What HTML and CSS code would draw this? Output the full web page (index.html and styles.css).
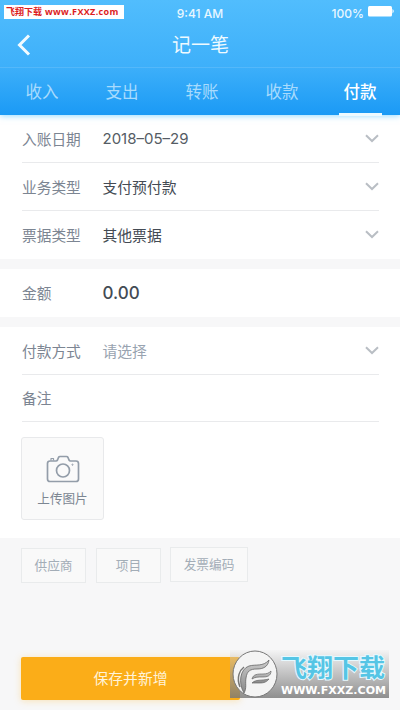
FILE: index.html
```html
<!DOCTYPE html>
<html lang="zh-CN">
<head>
<meta charset="utf-8">
<title>记一笔</title>
<link rel="stylesheet" href="styles.css">
</head>
<body>
<div class="app">
  <header class="header">
    <div class="status">
      <span class="time">9:41 AM</span>
      <span class="power">100%
        <svg class="battery" width="27" height="12" viewBox="0 0 27 12"><rect width="24" height="10.500" rx="1.5" fill="#fff"/><path d="M24.500 3q2.500 2.200 0 4.500z" fill="#fff"/></svg>
      </span>
    </div>
    <div class="nav">
      <svg class="back" width="14" height="22" viewBox="0 0 14 22"><path d="M12 1.500 2.500 11l9.500 9.500" fill="none" stroke="#f2fbff" stroke-width="3"/></svg>
      <h1>记一笔</h1>
    </div>
    <nav class="tabs">
      <span class="tab">收入</span>
      <span class="tab">支出</span>
      <span class="tab">转账</span>
      <span class="tab">收款</span>
      <span class="tab active">付款</span>
    </nav>
    <div class="site-tag"><span class="site-name">飞翔下载</span><span class="site-url">www.FXXZ.com</span></div>
  </header>

  <section class="group first">
    <div class="row"><span class="label">入账日期</span><span class="value date">2018<i>–</i>05<i>–</i>29</span><svg class="chev" width="14" height="9" viewBox="0 0 14 9"><path d="M1 1.3 7 7l6-5.7"/></svg></div>
    <div class="row"><span class="label">业务类型</span><span class="value">支付预付款</span><svg class="chev" width="14" height="9" viewBox="0 0 14 9"><path d="M1 1.3 7 7l6-5.7"/></svg></div>
    <div class="row"><span class="label">票据类型</span><span class="value">其他票据</span><svg class="chev" width="14" height="9" viewBox="0 0 14 9"><path d="M1 1.3 7 7l6-5.7"/></svg></div>
  </section>

  <section class="group">
    <div class="row"><span class="label">金额</span><span class="value amount">0.00</span></div>
  </section>

  <section class="group last">
    <div class="row"><span class="label">付款方式</span><span class="value hint">请选择</span><svg class="chev" width="14" height="9" viewBox="0 0 14 9"><path d="M1 1.3 7 7l6-5.7"/></svg></div>
    <div class="row note"><span class="label">备注</span></div>
    <div class="upload">
      <svg width="34" height="28" viewBox="0 0 34 28" fill="none" stroke="#939da9" stroke-width="1.7" stroke-linejoin="round"><path d="M4 6h6q1 0 1.500-1l1-2.500q.5-1 1.500-1h6.500q1 0 1.500 1l1 2.500q.5 1 1.500 1H30q2.500 0 2.500 2.500v15.500q0 2.500-2.500 2.500H4q-2.500 0-2.500-2.500V8.500Q1.500 6 4 6z"/><path d="M5 5.500V3.500h2.500v2" stroke-width="1.200"/><circle cx="17" cy="15.500" r="6.500"/><circle cx="26.500" cy="9.700" r=".6" stroke-width="1"/></svg>
      <span>上传图片</span>
    </div>
  </section>

  <div class="chips">
    <span class="chip">供应商</span>
    <span class="chip">项目</span>
    <span class="chip wide">发票编码</span>
  </div>

  <div class="actions">
    <div class="save">保存并新增</div>
  </div>

  <div class="badge">
    <svg class="badge-logo" width="46" height="48" viewBox="0 0 46 48">
      <defs><linearGradient id="wing" x1="0" y1="0" x2="0" y2="1"><stop offset="0" stop-color="#ccc"/><stop offset="1" stop-color="#888"/></linearGradient></defs>
      <ellipse cx="23" cy="24" rx="22" ry="23" fill="#f4f4f4" stroke="#777"/>
      <path d="M12 43C6 33 8 19 17 16c7-2 14 1 20-6-1 7-6 9-12 9-7 0-10 2-11 9-1 5 1 10-2 15z" fill="url(#wing)" stroke="#666" stroke-width=".8"/>
      <path d="M8 37C4 27 8 20 12 17" fill="none" stroke="#777" stroke-width="1.500"/>
      <path d="M20 29c1-5 6-5 11-5 4 0 6-1 8-3 0 5-4 6-8 6-5 0-8 0-11 2zM20 33c4-4 9-2 17-4-3 4-7 4-10 4-3 0-5 0-7 0z" fill="url(#wing)" stroke="#666" stroke-width=".7"/>
    </svg>
    <div class="badge-text">
      <svg class="badge-name" width="107" height="32" viewBox="0 0 107 32"><text x="1" y="24" textLength="104" lengthAdjust="spacingAndGlyphs">飞翔下载</text></svg>
      <svg class="badge-url" width="108" height="14" viewBox="0 0 108 14"><text x="1" y="10" textLength="105" lengthAdjust="spacingAndGlyphs">WWW.FXXZ.COM</text></svg>
    </div>
  </div>
</div>
</body>
</html>
```
FILE: styles.css
```css
* { box-sizing: border-box; }
body {
  margin: 0;
  font-family: Inter, "Noto Sans CJK SC", sans-serif;
  color: #444b54;
}
.app {
  position: relative;
  width: 400px;
  height: 710px;
  overflow: hidden;
  background: #f7f7f8;
}
.header {
  position: relative;
  z-index: 1;
  height: 115px;
  background: linear-gradient(#51bdfd, #3eb0fa 57%, #1b9af5);
  box-shadow: 0 1px 6px rgba(80, 195, 255, .6);
}
.status {
  position: relative;
  height: 26px;
  color: #e9f7ff;
  font-size: 12px;
  font-weight: 500;
  line-height: 27px;
  text-align: center;
}
.power {
  position: absolute;
  right: 5px;
  top: 0;
  display: flex;
  gap: 4px;
}
.battery { margin-top: 6px; }
.nav {
  position: relative;
  display: flex;
  align-items: center;
  justify-content: center;
  height: 42px;
  border-bottom: 1px solid rgba(255, 255, 255, .12);
}
.nav h1 {
  margin: 0;
  padding: 0 0 2px 1px;
  font-size: 19px;
  font-weight: 400;
  line-height: 28px;
  color: #effaff;
}
.back { position: absolute; left: 17px; top: 8px; }
.tabs { display: flex; height: 47px; padding-left: 2px; }
.tab {
  width: 80px;
  color: #a8dbfd;
  font-size: 16.5px;
  line-height: 49px;
  text-align: center;
}
.tab.active {
  position: relative;
  width: 76px;
  color: #fff;
  font-weight: 500;
}
.tab.active::after {
  content: "";
  position: absolute;
  left: 17px;
  bottom: -1px;
  width: 43px;
  height: 3px;
  background: #eefaff;
}
.site-tag {
  position: absolute;
  left: 4px;
  top: 5px;
  display: flex;
  align-items: center;
  gap: 3px;
  width: 120px;
  height: 14px;
  padding-left: 2px;
  background: #fff;
  color: #dc1c22;
  font-weight: 700;
  white-space: nowrap;
}
.site-name { font-size: 9px; line-height: 14px; }
.site-url { font: 700 9px/14px "Open Sans", sans-serif; letter-spacing: .35px; }
.group {
  margin-bottom: 10px;
  padding: 0 21px 0 22px;
  background: #fff;
}
.first { height: 144px; }
.last { height: 211px; margin-bottom: 0; }
.row {
  display: flex;
  align-items: center;
  height: 48px;
  border-bottom: 1px solid #e9eaec;
}
.row:last-child { border-color: transparent; }
.label { width: 80.5px; color: #7c8592; font-size: 14.7px; }
.value { flex: 1; font-size: 14.8px; }
.date { color: #555c64; font-size: 15px; }
.date i { font-style: normal; }
.amount { font-size: 17px; font-weight: 500; }
.hint { color: #98a3b0; }
.chev { fill: none; stroke: #b9bec4; stroke-width: 2; }
.note { height: 47px; padding-bottom: 1px; }
.upload {
  display: flex;
  flex-direction: column;
  align-items: center;
  width: 83px;
  height: 83px;
  margin: 15px 0 0 -1px;
  padding-top: 17px;
  border: 1px solid #e8e9eb;
  border-radius: 3px;
  background: #fafafa;
}
.upload span { margin-top: 7px; color: #7c8692; font-size: 12.6px; line-height: 18px; }
.chips { display: flex; gap: 10px; padding: 10px 0 0 21px; height: 119px; }
.chip {
  width: 65px;
  height: 35px;
  border: 1px solid #e9ebec;
  background: #f9f9f9;
  color: #a3adb7;
  font-size: 12.7px;
  line-height: 33px;
  text-align: center;
}
.chip.wide { width: 78px; margin: -1px 0 0 -1px; }
.actions { padding-left: 21px; }
.save {
  width: 219px;
  height: 43px;
  border-radius: 2px;
  background: #fbad18;
  box-shadow: 0 1px 7px rgba(252, 189, 62, .35);
  color: #fff3d8;
  font-size: 14.8px;
  line-height: 44px;
  text-align: center;
}
.badge {
  position: absolute;
  left: 230px;
  top: 650px;
  display: flex;
  width: 159px;
  height: 48px;
  background: linear-gradient(rgba(238, 238, 238, .35), rgba(120, 120, 120, .82));
}
.badge-logo { margin-left: 2px; }
.badge-text { display: flex; flex-direction: column; margin-left: 2px; padding-top: 3px; }
.badge-name { overflow: visible; }
.badge-name text {
  font: 700 25px "Noto Sans CJK SC", sans-serif;
  fill: #55c5e5;
  stroke: #e6f9ff;
  stroke-width: 2px;
  paint-order: stroke;
}
.badge-url { margin-top: -1px; }
.badge-url text {
  font: 700 10px "DejaVu Sans", sans-serif;
  fill: #fff;
}
```
